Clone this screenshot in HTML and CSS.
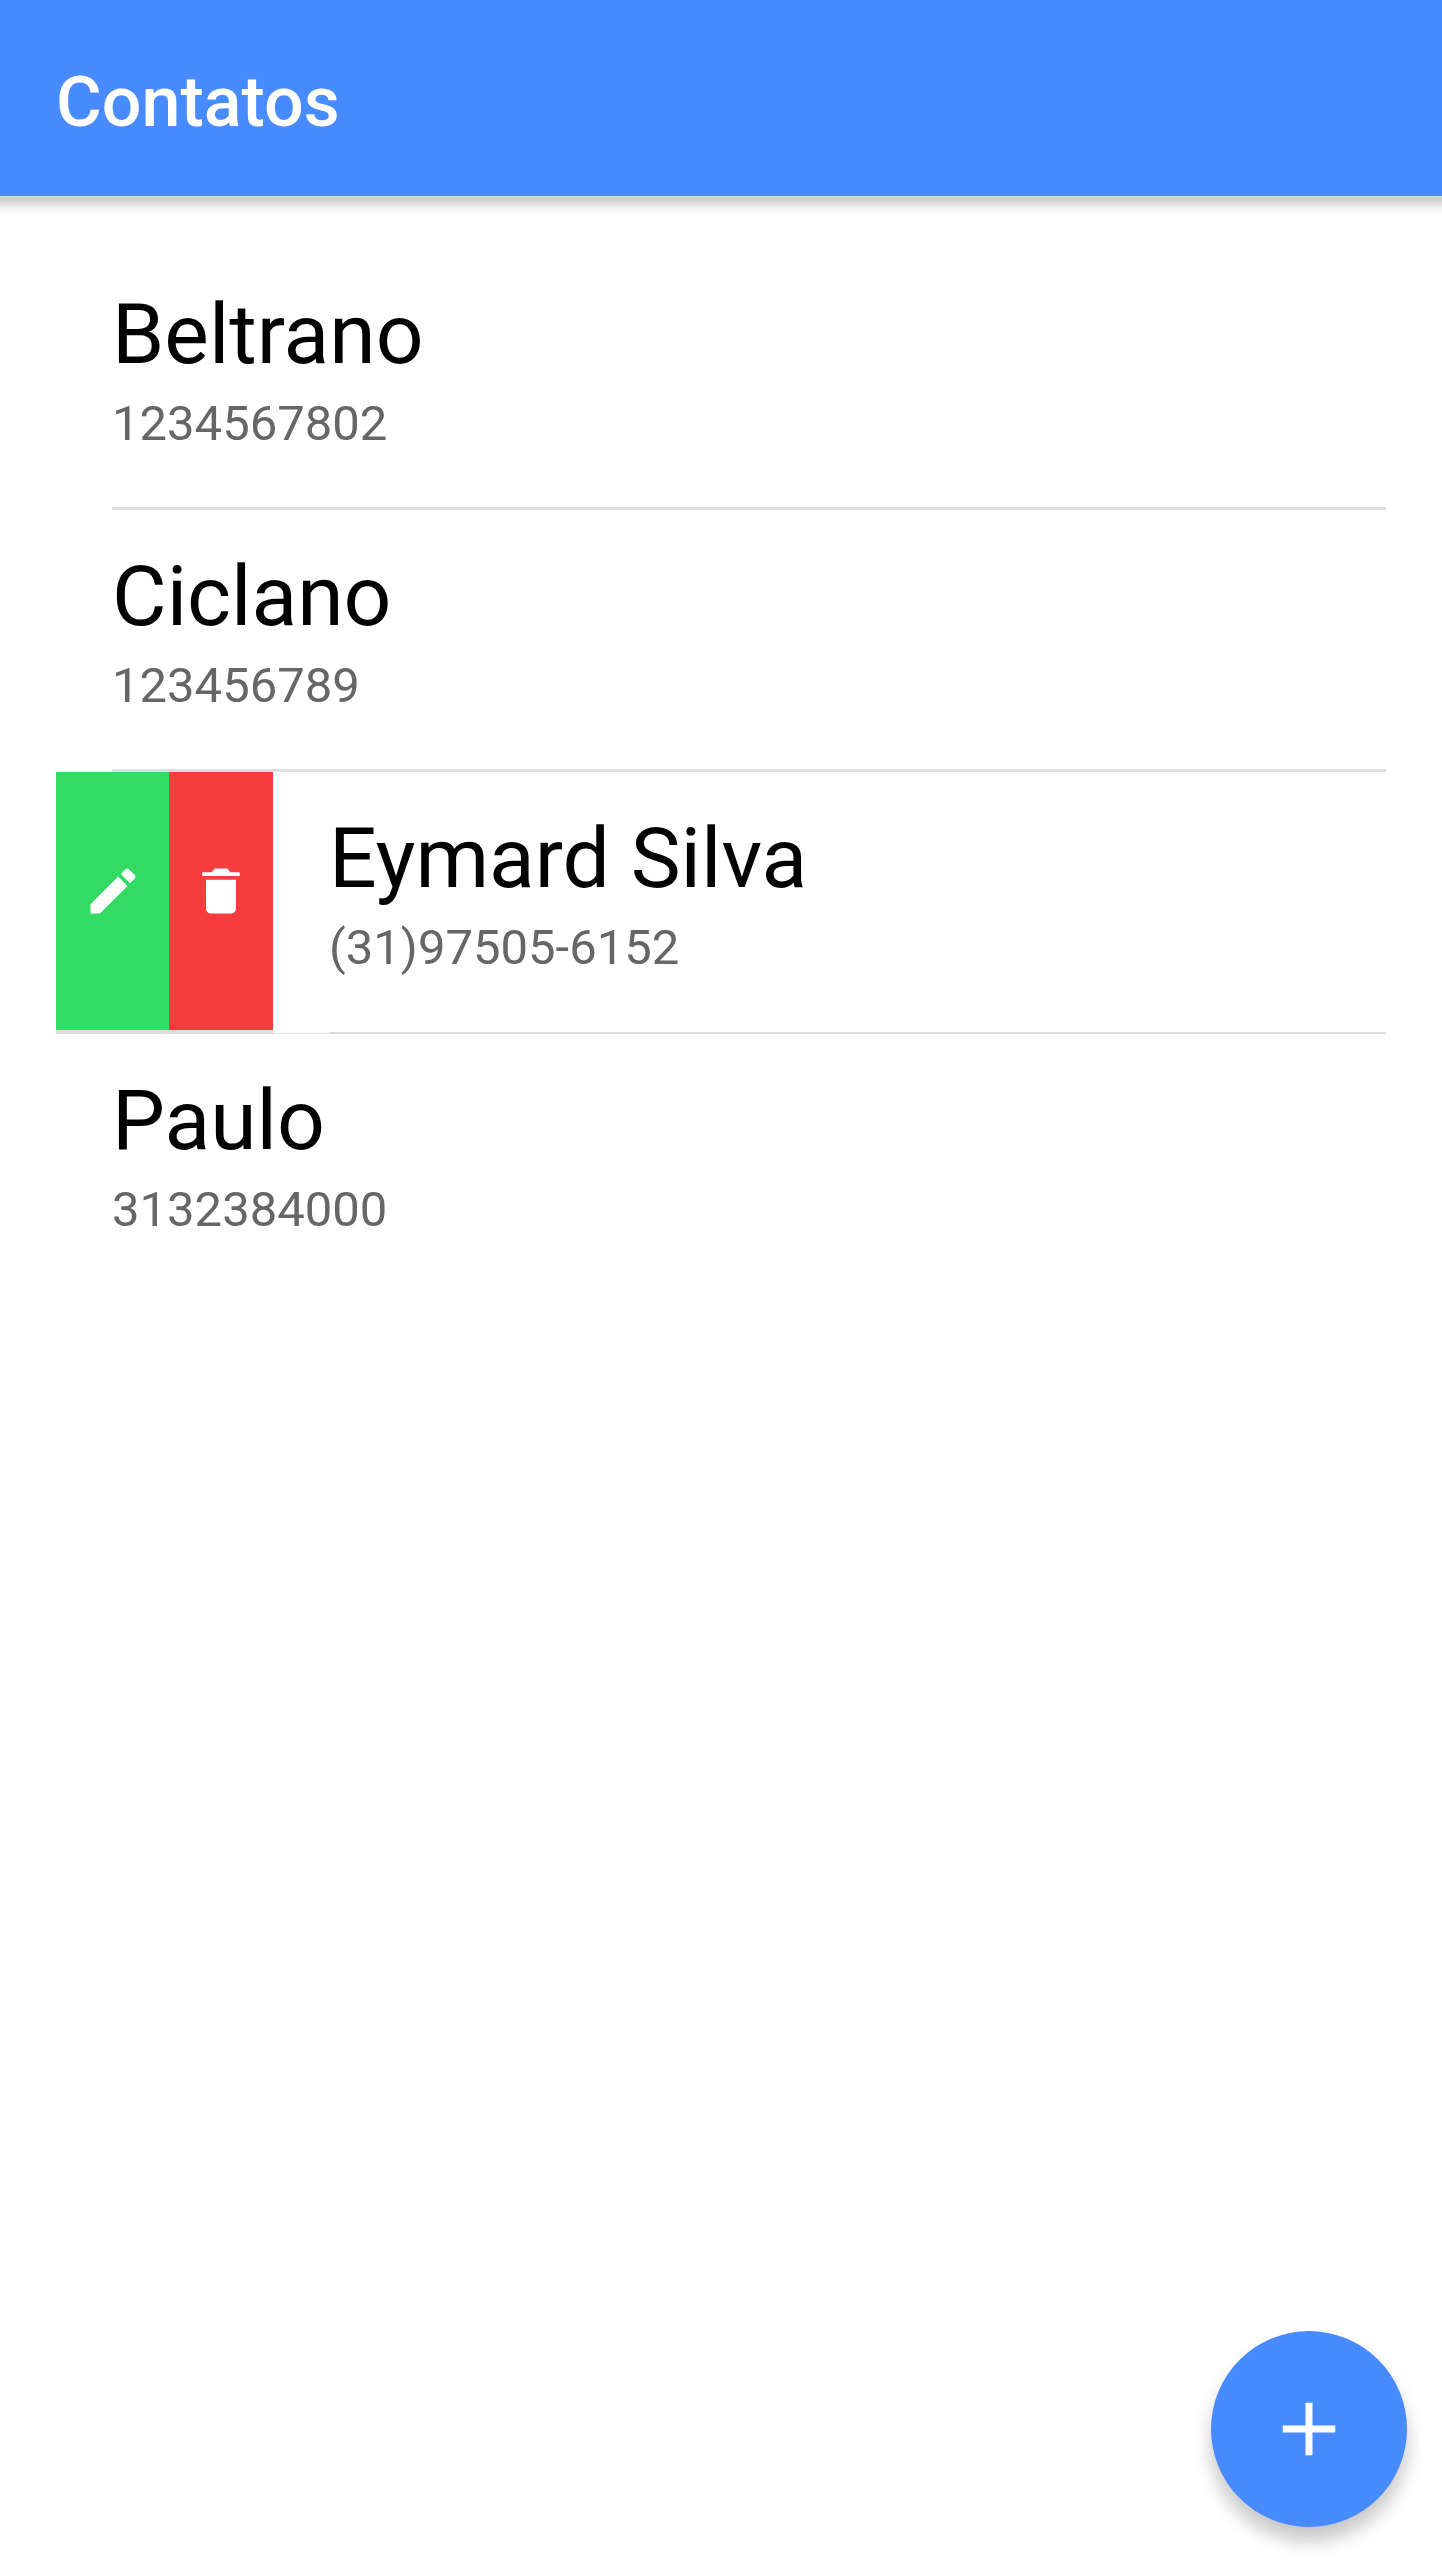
FILE: index.html
```html
<!DOCTYPE html>
<html lang="pt-BR">
<head>
  <meta charset="utf-8">
  <meta name="viewport" content="width=device-width, initial-scale=1">
  <title>Contatos</title>
  <link rel="stylesheet" href="styles.css">
</head>
<body>
  <header class="toolbar">
    <h1 class="toolbar-title">Contatos</h1>
  </header>

  <main class="content">
    <ul class="contacts">
      <li class="contact">
        <div class="contact-body">
          <h2 class="contact-name">Beltrano</h2>
          <p class="contact-phone">1234567802</p>
        </div>
      </li>
      <li class="contact">
        <div class="contact-body">
          <h2 class="contact-name">Ciclano</h2>
          <p class="contact-phone">123456789</p>
        </div>
      </li>
      <li class="contact contact-open">
        <div class="contact-options">
          <button class="option option-edit" type="button" aria-label="Editar">
            <svg class="option-icon" viewBox="0 0 512 512" aria-hidden="true"><path d="M64 368v80h80l235.727-235.729-79.999-79.998L64 368zm377.602-217.602c8.531-8.531 8.531-21.334 0-29.865l-50.135-50.135c-8.531-8.531-21.334-8.531-29.865 0l-39.468 39.469 79.999 79.998 39.469-39.467z"/></svg>
          </button>
          <button class="option option-delete" type="button" aria-label="Excluir">
            <svg class="option-icon" viewBox="0 0 512 512" aria-hidden="true"><path d="M128 405.429C128 428.846 147.198 448 170.667 448h170.667C364.802 448 384 428.846 384 405.429V160H128v245.429zM416 96h-80l-26.785-32H202.786L176 96H96v32h320V96z"/></svg>
          </button>
        </div>
        <div class="contact-body">
          <h2 class="contact-name">Eymard Silva</h2>
          <p class="contact-phone">(31)97505-6152</p>
        </div>
      </li>
      <li class="contact">
        <div class="contact-body">
          <h2 class="contact-name">Paulo</h2>
          <p class="contact-phone">3132384000</p>
        </div>
      </li>
    </ul>
  </main>

  <button class="fab" type="button" aria-label="Adicionar contato">
    <svg class="fab-icon" viewBox="0 0 512 512" aria-hidden="true"><path d="M416 277.333H277.333V416h-42.666V277.333H96v-42.666h138.667V96h42.666v138.667H416v42.666z"/></svg>
  </button>
</body>
</html>
```

FILE: styles.css
```css
* {
  box-sizing: border-box;
}

body {
  margin: 0;
  min-height: 100vh;
  background: #fff;
  color: #000;
  font-family: Roboto, "Liberation Sans", sans-serif;
}

.toolbar {
  display: flex;
  align-items: center;
  height: 196px;
  padding: 8px 56px 0;
  background: #488aff;
}

.toolbar-title {
  margin: 0;
  color: #fff;
  font-size: 70px;
  font-weight: 500;
  line-height: 82px;
}

/* Soft shadow under the toolbar */
.content::before {
  content: "";
  display: block;
  height: 18px;
  background: linear-gradient(#d6d6d6, #cfcfcf 20%, #f3f3f3 70%, #fcfcfc);
}

.contacts {
  margin: 0;
  padding: 34px 56px 56px;
  list-style: none;
}

.contact {
  display: flex;
  padding-left: 56px;
}

.contact-body {
  flex: 1;
  min-width: 0;
  padding: 38px 0 55px;
  border-bottom: 3px solid #dedede;
}

.contact:last-child .contact-body {
  border-bottom-color: transparent;
}

.contact-name,
.contact-phone {
  margin: 0;
  font-weight: 400;
}

.contact-name {
  margin-bottom: 11px;
  font-size: 84px;
  line-height: 98px;
}

.contact-phone {
  color: #666;
  font-size: 49px;
  line-height: 57px;
}

/* Item swiped open, with its actions showing */
.contact-open {
  gap: 56px;
  padding-left: 0;
  box-shadow: inset 0 -1px #dedede;
}

.contact-open .contact-body {
  border-bottom-width: 2px;
  padding-bottom: 56px;
}

.contact-options {
  display: flex;
  border-bottom: 4px solid #dedede;
}

.option {
  display: flex;
  align-items: center;
  justify-content: center;
  width: 104px;
  padding: 0 0 21px;
  border: 0;
  cursor: pointer;
}

.option-edit {
  width: 113px;
  background: #32db64;
}

.option-delete {
  background: #f53d3d;
}

.option-icon {
  width: 60px;
  height: 60px;
  fill: #fff;
}

.fab {
  position: fixed;
  right: 35px;
  bottom: 35px;
  display: flex;
  align-items: center;
  justify-content: center;
  width: 196px;
  height: 196px;
  padding: 0;
  border: 0;
  border-radius: 50%;
  background: #488aff;
  box-shadow: 0 14px 21px rgba(0, 0, 0, 0.14), 0 14px 18px rgba(0, 0, 0, 0.1);
  cursor: pointer;
}

.fab-icon {
  width: 84px;
  height: 84px;
  fill: #fff;
}
```
